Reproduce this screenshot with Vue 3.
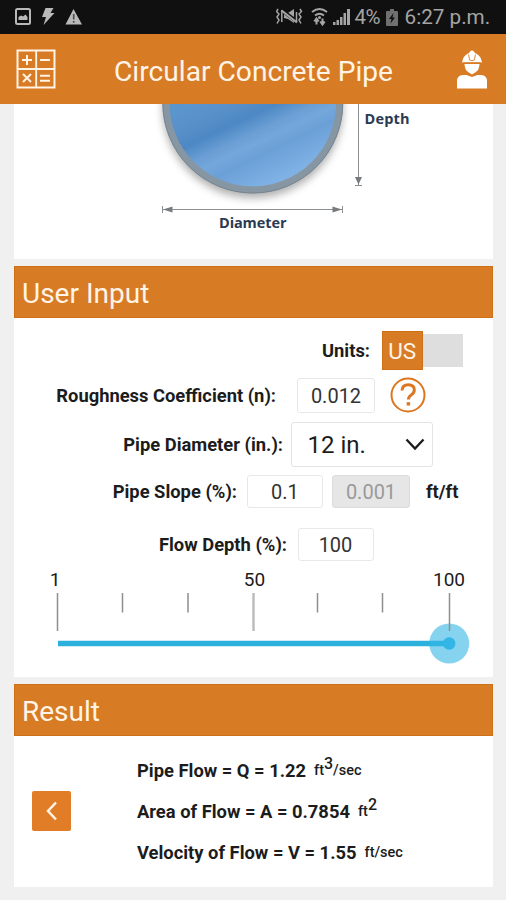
<script setup>
import { ref } from 'vue'

const roughness = ref('0.012')
const slope = ref('0.1')
const slopeRatio = ref('0.001')
const depth = ref('100')

const ticks = [
  { x: 43.5, long: true },
  { x: 108.5 },
  { x: 174 },
  { x: 239.5, long: true, soft: true },
  { x: 303.5 },
  { x: 368.5 },
  { x: 435.5, long: true }
]
</script>

<template>
  <div class="screen">
    <div class="status">
      <svg class="status-left" width="80" height="34" viewBox="0 0 80 34">
        <rect x="2" y="9" width="14" height="15" rx="1.5" fill="none" stroke="#b9b9b9" stroke-width="2" />
        <path d="M4.500 20v-3l2.500-1.500 2 1 2.500-2 2 2.500V20z" fill="#b9b9b9" />
        <path d="M31.500 8h8l-3 5h4L29.500 25l2.500-8h-4z" fill="#b9b9b9" />
        <path d="M59.500 9 L68 24.500H51.500z" fill="#b9b9b9" />
        <path d="M59.700 14v5.500M59.700 21v1.800" stroke="#4a4a4a" stroke-width="1.600" />
      </svg>
      <div class="status-right">
        <svg width="76" height="34" viewBox="0 0 76 34">
          <g fill="none" stroke="#a5a5a5" stroke-width="1.500">
            <path d="M2 9l-1.500 2.500L3 14l-2 3 2 3-2 3.500M24 9l1.500 2.500L23 14l2 3-2 3 2 3.500" />
          </g>
          <path d="M8 14l4-1 6-4v14l-6-4-4-1z" fill="#a5a5a5" />
          <path d="M6 10.500l15 11" stroke="#101010" stroke-width="3.500" />
          <path d="M5.500 10.500l15.500 12" stroke="#a5a5a5" stroke-width="2.200" />
          <path d="M5.800 10v12M20.500 12v10" stroke="#a5a5a5" stroke-width="1.500" />
          <g fill="none" stroke="#a5a5a5" stroke-width="2">
            <path d="M36 12q7.500-6 15 0M39 15.500q4.500-3.500 9 0" />
          </g>
          <circle cx="43.500" cy="17.500" r="1.500" fill="#a5a5a5" />
          <path d="M40.500 18.500v6M38.300 21.500l2.200-3 2.200 3M46.500 18.500v6M44.300 21.500l2.200 3 2.200-3" fill="none" stroke="#a5a5a5" stroke-width="2" />
          <path d="M57 22h2.500v3H57zM60.500 20H63v5h-2.500zM64 17h2.500v8H64zM67.500 13H70v12h-2.500zM71 9h3v16h-3z" fill="#a5a5a5" />
        </svg>
        <span class="percent">4%</span>
        <svg class="battery" width="12" height="17" viewBox="0 0 12 17">
          <path d="M1 2h3V0h4v2h3q1 0 1 1v13q0 1-1 1H1q-1 0-1-1V3q0-1 1-1z" fill="#707070" />
          <path d="M7.500 4L3 10h2.500l-1 4.500L9 8.500H6.500z" fill="#111" />
        </svg>
        <span class="clock">6:27 p.m.</span>
      </div>
    </div>

    <header class="bar">
      <svg class="calc" width="40" height="40" viewBox="0 0 40 40">
        <g fill="none" stroke="#fff4e6">
          <path d="M1.500 1.500h37v37h-37z" stroke-width="2" />
          <path d="M20.200 1.500v37M1.500 20h37" stroke-width="1.800" />
          <path d="M6 11h10M11 6v10M24 11h10M7 25l8 8M15 25l-8 8M24 26.800h10M24 31.800h10" stroke-width="2" />
        </g>
      </svg>
      <h1>Circular Concrete Pipe</h1>
      <svg class="worker" width="30" height="39" viewBox="0 0 30 39">
        <path d="M0 38.500V31.500q0-6.500 6-6.500h3.500l5.500 2 5.500-2H24q6 0 6 6.500v7z" fill="#fff" />
        <path d="M7.500 14h15q0 5-3.500 8l-4 2.500-4-2.500q-3.500-3-3.500-8z" fill="#fff" />
        <path d="M5 12.500q1-7 7-9.500l1.500-2q1.500-1 3 0L18 3q6 2.500 7 9.500z" fill="#fff" />
        <path d="M11.500 4.500l1.200 5.500q2.300 1.500 4.600 0l1.200-5.500" fill="none" stroke="#d87b25" stroke-width=".9" />
        <path d="M6 12.700h18" stroke="#d87b25" stroke-width=".8" />
      </svg>
    </header>

    <main>
      <section class="figure">
        <svg width="478" height="155" viewBox="0 0 478 155">
          <defs>
            <linearGradient id="water" gradientUnits="userSpaceOnUse" x1="205" y1="-12" x2="250" y2="82">
              <stop offset="0" stop-color="#5b95cd" />
              <stop offset=".16" stop-color="#5990c9" />
              <stop offset=".34" stop-color="#4d88c4" />
              <stop offset=".5" stop-color="#6b9fd5" />
              <stop offset=".6" stop-color="#74a7db" />
              <stop offset=".72" stop-color="#6ba0d7" />
              <stop offset="1" stop-color="#7fb1e4" />
            </linearGradient>
            <filter id="shade" x="-20%" y="-20%" width="140%" height="140%">
              <feGaussianBlur stdDeviation="4.500" />
            </filter>
          </defs>
          <circle cx="238.800" cy="4" r="90" fill="#777" opacity=".6" filter="url(#shade)" />
          <circle cx="238.800" cy="-1" r="86.800" fill="url(#water)" stroke="#8796a3" stroke-width="7" />
          <circle cx="238.800" cy="-1" r="90" fill="none" stroke="#788590" stroke-width="1" />
          <g stroke="#8b8f92" fill="#777b7e">
            <path d="M344.500 0v81M341 81.500h7M148 105.500h181M148.500 102v7M328.500 102v7" />
            <path d="M341 73h7l-3.500 7.500zM149 105.500l9.500-3v6zM328 105.500l-9.500-3v6z" stroke="none" />
          </g>
          <text x="350.500" y="19.500" textLength="45">Depth</text>
          <text x="205" y="124" textLength="67.500">Diameter</text>
        </svg>
      </section>

      <section>
        <h2>User Input</h2>
        <div class="body input-body">
          <div class="row units">
            <span class="label">Units:</span>
            <div class="toggle">
              <span class="on">US</span><span class="off"></span>
            </div>
          </div>
          <div class="row rough">
            <span class="label">Roughness Coefficient (n):</span>
            <div class="field">{{ roughness }}</div>
            <svg class="help" width="36" height="36" viewBox="0 0 36 36" fill="none" stroke="#dc7720">
              <circle cx="18" cy="18" r="16.500" stroke-width="2" />
              <path d="M12 13.500q.3-5.800 6.300-5.800 6 0 6 5.200 0 2.700-3 5-2.900 2.100-2.900 4.600" stroke-width="3" />
              <path d="M18.400 25.200v3.300" stroke-width="3.500" />
            </svg>
          </div>
          <div class="row diam">
            <span class="label">Pipe Diameter (in.):</span>
            <div class="select">
              <span>12 in.</span>
              <svg width="20" height="13" viewBox="0 0 20 13">
                <path d="M1.500 1.500L10 10.500l8.500-9" fill="none" stroke="#1c1c1c" stroke-width="2.300" />
              </svg>
            </div>
          </div>
          <div class="row slope">
            <span class="label">Pipe Slope (%):</span>
            <div class="field">{{ slope }}</div>
            <div class="field disabled">{{ slopeRatio }}</div>
            <span class="unit">ft/ft</span>
          </div>
          <div class="row depth">
            <span class="label">Flow Depth (%):</span>
            <div class="field">{{ depth }}</div>
          </div>
          <div class="scale"><span>1</span><span class="mid">50</span><span>100</span></div>
          <svg class="slider" width="478" height="75" viewBox="0 0 478 75">
            <path d="M44 50.500h391" stroke="#2cb1dd" stroke-width="5.600" />
            <circle cx="435.200" cy="50.500" r="20" fill="#33b5e5" opacity=".6" />
            <circle cx="435.200" cy="50.500" r="6.200" fill="#33b5e5" />
            <path
              v-for="t in ticks"
              :key="t.x"
              :d="`M${t.x} 0v${t.long ? 38 : 19.500}`"
              :stroke="t.soft ? '#bcbcbc' : '#8e8e8e'"
              :stroke-width="t.soft ? 2.500 : 1.500"
            />
          </svg>
        </div>
      </section>

      <section>
        <h2>Result</h2>
        <div class="body result-body">
          <div class="back">
            <svg width="13" height="20" viewBox="0 0 13 20">
              <path d="M11 1.500L3 10l8 8.500" fill="none" stroke="#fff4e6" stroke-width="2.500" />
            </svg>
          </div>
          <div class="results">
            <p><span>Pipe Flow = Q = 1.22</span><small>ft<sup>3</sup>/sec</small></p>
            <p><span>Area of Flow = A = 0.7854</span><small>ft<sup>2</sup></small></p>
            <p><span>Velocity of Flow = V = 1.55</span><small>ft/sec</small></p>
          </div>
        </div>
      </section>
    </main>
  </div>
</template>

<style>
body { background: #f0f0f0; }
</style>

<style scoped>
.screen {
  width: 506px;
  height: 900px;
  overflow: hidden;
  background: #f0f0f0;
  font-family: Roboto, sans-serif;
  color: #1c1c1c;
}
svg { display: block; flex: none; }
.status {
  height: 34px;
  background: #101010;
  display: flex;
  justify-content: space-between;
  padding: 0 15px 0 14px;
}
.status-right { display: flex; align-items: center; color: #a5a5a5; white-space: nowrap; }
.status-right > svg:first-child { margin: 0 1px 0 -2px; }
.percent { width: 29px; margin-left: 2px; font-size: 20.5px; letter-spacing: -0.5px; }
.battery { margin: 0 7px 0 2px; }
.clock { width: 86.500px; font-size: 20.7px; }
.bar {
  height: 70px;
  background: #d87b25;
  display: flex;
  align-items: center;
  padding: 0 19px 0 16px;
}
h1 { margin: 4px 0 0 58px; flex: 1; font-size: 28.2px; font-weight: 400; color: #fff4e6; white-space: nowrap; }
main { display: flex; flex-direction: column; gap: 7px; padding: 0 13px 0 14px; }
.figure { height: 155px; background: #fff; }
.figure text { font: 700 14.5px "Open Sans", sans-serif; fill: #2b3a52; }
h2 {
  margin: 0;
  height: 51.500px;
  line-height: 55px;
  padding-left: 8px;
  background: #d87b25;
  box-shadow: inset 0 0 0 1px #cf6f16;
  font-size: 28px;
  font-weight: 400;
  color: #fff4e6;
}
.body { background: #fff; }
.input-body { height: 359.500px; display: flex; flex-direction: column; }
.row { display: flex; align-items: center; flex: none; white-space: nowrap; }
.label, .unit { font-size: 18.35px; font-weight: 700; }
.label { text-align: right; }
.field {
  box-sizing: border-box;
  border: 1.500px solid #e8e8e8;
  border-radius: 3px;
  font-size: 20px;
  display: flex;
  align-items: center;
  justify-content: center;
  color: #333;
  padding-top: 1px;
}
.units { height: 42px; margin-top: 12px; }
.units .label { width: 356px; }
.toggle { display: flex; align-items: center; margin-left: 12px; }
.on {
  width: 40.500px; height: 39px; line-height: 41px; text-align: center;
  background: #d87b25; box-shadow: inset 0 0 0 1px #cf6f16; color: #fff4e6; font-size: 22.5px;
}
.off { width: 40.500px; height: 33.500px; background: #dedede; }
.rough { height: 47.500px; }
.rough .label { width: 262px; }
.rough .field { width: 78px; height: 35px; margin-left: 21px; }
.help { margin-left: 14.500px; }
.diam { height: 50px; }
.diam .label { width: 269px; }
.select {
  box-sizing: border-box; width: 142px; height: 45px; margin-left: 8px; padding: 1px 7px 0 15.500px;
  border: 1.500px solid #e4e4e4; border-radius: 3px;
  display: flex; align-items: center; justify-content: space-between; font-size: 24px;
}
.slope { height: 44px; }
.slope .label { width: 223px; }
.slope .field { width: 76px; height: 33px; margin-left: 10px; }
.slope .disabled { width: 78px; margin-left: 9px; background: #e6e6e6; border-color: #dcdcdc; color: #999; }
.unit { margin-left: 16px; }
.depth { height: 36px; margin-top: 13.500px; }
.depth .label { width: 273px; }
.depth .field { width: 76px; height: 33px; margin-left: 10.500px; }
.scale {
  display: grid; grid-template-columns: 200px 1fr 200px; text-align: center;
  margin: 4px -56px 0 -59px; height: 26px; line-height: 26px; font-size: 19px;
}
.mid { padding-left: 5px; }
.result-body { height: 151px; display: flex; align-items: center; }
.back {
  width: 39.500px; height: 39.500px; margin-left: 17.500px; background: #e07d26; border-radius: 2px;
  display: flex; align-items: center; justify-content: center;
}
.results { margin: 1px 0 0 66px; font-weight: 700; }
.results p { margin: 0; height: 41px; display: flex; align-items: center; font-size: 18.35px; white-space: nowrap; }
.results small { margin-left: 8px; font-size: 14.500px; font-weight: 500; }
.results sup { font-size: 16px; line-height: 0; vertical-align: 6px; }
</style>
